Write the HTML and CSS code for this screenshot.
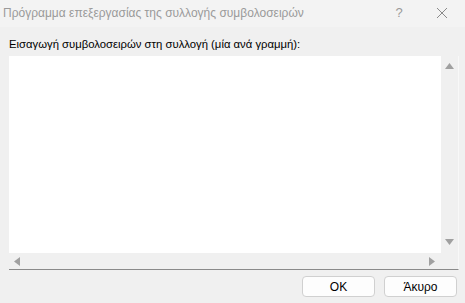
FILE: index.html
```html
<!DOCTYPE html>
<html lang="el">
<head>
    <meta charset="UTF-8">
    <title>Πρόγραμμα επεξεργασίας της συλλογής συμβολοσειρών</title>
    <link rel="stylesheet" href="styles.css">
</head>
<body>
    <div class="dialog">
        <!-- Title bar -->
        <div class="titlebar">
            <span class="title">Πρόγραμμα επεξεργασίας της συλλογής συμβολοσειρών</span>
            <span class="help">?</span>
            <span class="close">
                <svg width="12" height="12" viewBox="0 0 12 12"><path d="M1 1L11 11M11 1L1 11" stroke="#8a8a8a" stroke-width="1"/></svg>
            </span>
        </div>

        <div class="content">
            <div class="label">Εισαγωγή συμβολοσειρών στη συλλογή (μία ανά γραμμή):</div>

            <div class="editbox">
                <div class="edit-row">
                    <div class="text-area"></div>
                    <div class="vscroll">
                        <svg width="9" height="6" viewBox="0 0 9 6"><path d="M4.5 0L9 6H0Z" fill="#a0a0a0"/></svg>
                        <svg width="9" height="6" viewBox="0 0 9 6"><path d="M0 0H9L4.5 6Z" fill="#a0a0a0"/></svg>
                    </div>
                </div>
                <div class="hscroll-row">
                    <div class="hscroll">
                        <svg width="6" height="9" viewBox="0 0 6 9"><path d="M0 4.5L6 0V9Z" fill="#a0a0a0"/></svg>
                        <svg width="6" height="9" viewBox="0 0 6 9"><path d="M6 4.5L0 0V9Z" fill="#a0a0a0"/></svg>
                    </div>
                    <div class="corner"></div>
                </div>
            </div>

            <div class="buttons">
                <button class="btn">OK</button>
                <button class="btn">Άκυρο</button>
            </div>
        </div>
    </div>
</body>
</html>
```

FILE: styles.css
```css
body {
    margin: 0;
    background-color: #f0f0f0;
    font-family: "Liberation Sans", Arial, sans-serif;
    font-size: 12px;
    color: #000;
}

.dialog {
    width: 465px;
    height: 303px;
    display: flex;
    flex-direction: column;
}

.titlebar {
    height: 27px;
    display: flex;
    align-items: center;
    padding-left: 3px;
    background-color: #f3f3f3;
    color: #9a9a9a;
}

.title {
    flex: 1;
    font-size: 12px;
    margin-top: -2px;
}

.help {
    width: 40px;
    text-align: center;
    font-size: 13px;
    margin-top: -2px;
    padding-left: 8px;
}

.close {
    width: 46px;
    display: flex;
    justify-content: center;
    margin-top: -2px;
}

.content {
    flex: 1;
    padding: 8px 7px 0 9px;
    display: flex;
    flex-direction: column;
}

.label {
    height: 21px;
    line-height: 18px;
    font-size: 11.3px;
}

.editbox {
    width: 449px;
    height: 213px;
    display: flex;
    flex-direction: column;
    border-right: 1px solid #f8f8f8;
    border-bottom: 1px solid #8a8a8a;
}

.edit-row {
    flex: 1;
    display: flex;
}

.text-area {
    flex: 1;
    background-color: #fff;
}

.vscroll {
    width: 17px;
    background-color: #f0f0f0;
    display: flex;
    flex-direction: column;
    justify-content: space-between;
    align-items: center;
    padding: 7px 0 8px;
}

.hscroll-row {
    height: 16px;
    display: flex;
}

.hscroll {
    flex: 1;
    background-color: #f0f0f0;
    display: flex;
    justify-content: space-between;
    align-items: center;
    padding: 0 6px 0 5px;
}

.corner {
    width: 17px;
    background-color: #f0f0f0;
}

.buttons {
    display: flex;
    justify-content: flex-end;
    gap: 9px;
    margin-top: 6px;
    padding-right: 1px;
}

.btn {
    width: 73px;
    height: 21px;
    background-color: #fdfdfd;
    border: 1px solid #d0d0d0;
    border-radius: 4px;
    font-family: "Liberation Sans", Arial, sans-serif;
    font-size: 12px;
    padding: 0;
    color: #000;
}
```
